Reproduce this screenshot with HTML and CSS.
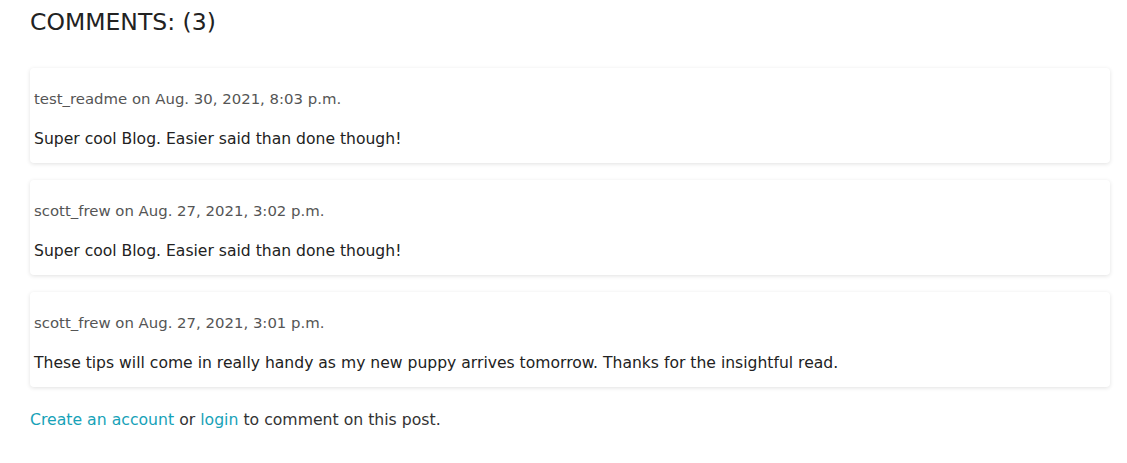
FILE: index.html
```html
<!DOCTYPE html>
<html>
<head>
<meta charset="utf-8">
<link rel="stylesheet" href="styles.css">
</head>
<body>
<main class="comments">
  <h2 class="comments-title">COMMENTS: (3)</h2>
  <div class="comment-list">
    <div class="comment">
      <p class="meta">test_readme on Aug. 30, 2021, 8:03 p.m.</p>
      <p class="body">Super cool Blog. Easier said than done though!</p>
    </div>
    <div class="comment">
      <p class="meta">scott_frew on Aug. 27, 2021, 3:02 p.m.</p>
      <p class="body">Super cool Blog. Easier said than done though!</p>
    </div>
    <div class="comment">
      <p class="meta">scott_frew on Aug. 27, 2021, 3:01 p.m.</p>
      <p class="body">These tips will come in really handy as my new puppy arrives tomorrow. Thanks for the insightful read.</p>
    </div>
  </div>
  <p class="login-note"><a href="#">Create an account</a> or <a href="#">login</a> to comment on this post.</p>
</main>
</body>
</html>
```
FILE: styles.css
```css
* { box-sizing: border-box; }
html, body { margin: 0; padding: 0; background: #fff; }
body {
  font-family: "DejaVu Sans", "Open Sans", sans-serif;
  color: #222;
}
.comments {
  width: 1080px;
  margin-left: 30px;
  padding-top: 7px;
}
.comments-title {
  margin: 0;
  font-size: 23.5px;
  font-weight: 400;
  line-height: 30px;
  color: #222;
  letter-spacing: 0;
}
.comment-list {
  display: flex;
  flex-direction: column;
  gap: 17px;
  margin-top: 31px;
}
.comment {
  height: 95px;
  padding: 19px 4px 0;
  background: #fff;
  border-radius: 4px;
  box-shadow: 0 1px 4px rgba(0, 0, 0, 0.12);
}
.comment p { margin: 0; line-height: 24px; }
.meta {
  font-size: 14.9px;
  color: #555;
}
.body {
  margin-top: 16px !important;
  font-size: 15.6px;
  color: #222;
}
.login-note {
  margin: 21px 0 0;
  font-size: 15.7px;
  line-height: 24px;
  color: #333;
}
.login-note a {
  color: #17a2b8;
  text-decoration: none;
}
```
